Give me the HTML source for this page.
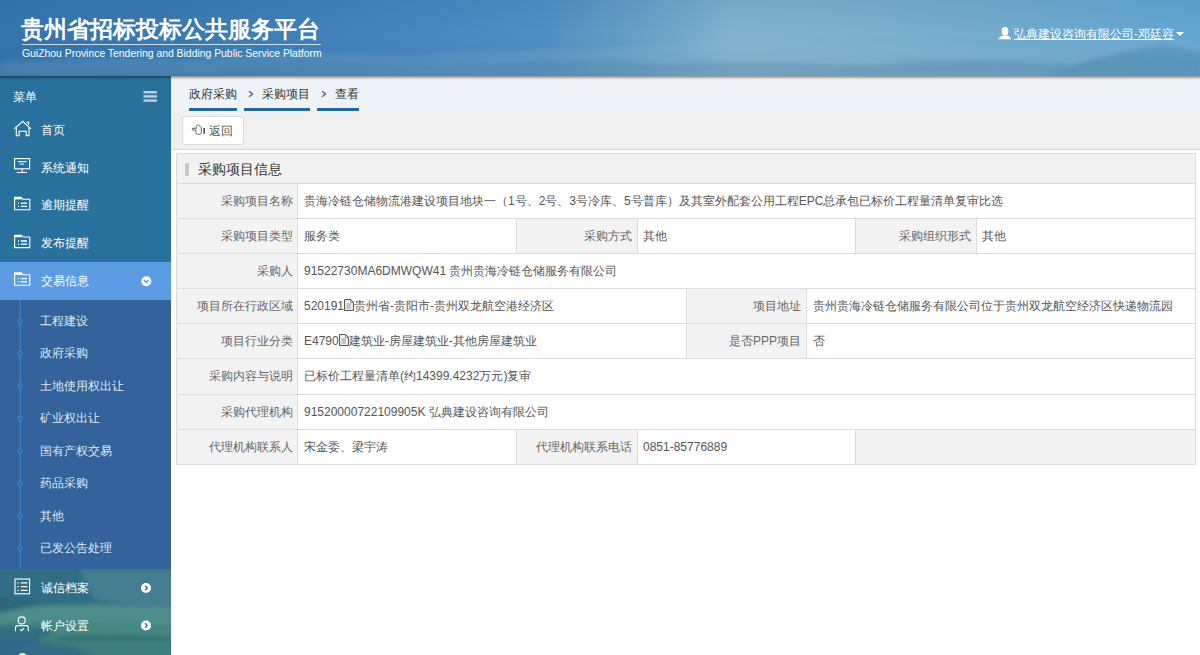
<!DOCTYPE html>
<html><head><meta charset="utf-8">
<style>
*{margin:0;padding:0;box-sizing:border-box}
html,body{width:1200px;height:655px;overflow:hidden;background:#fff;font-family:"Liberation Sans",sans-serif;font-size:12px;color:#333}
.a{position:absolute}
#hdr{left:0;top:0;width:1200px;height:76px;overflow:hidden;z-index:5;
background:
 radial-gradient(ellipse 300px 60px at 700px 10px,rgba(160,200,220,.55),rgba(160,200,220,0)),
 radial-gradient(ellipse 400px 30px at 300px 72px,rgba(120,160,190,.5),rgba(120,160,190,0)),
 linear-gradient(180deg,rgba(0,0,0,0) 60%,rgba(60,100,130,.25) 100%),
 linear-gradient(90deg,#3273ab 0%,#3f80b6 25%,#5e9ac2 50%,#7aafcc 62%,#6aa6cb 78%,#5a9ecb 100%);}
#shadow{left:0;top:76px;width:1200px;height:4px;background:linear-gradient(180deg,rgba(0,0,0,.42),rgba(0,0,0,.12) 60%,rgba(0,0,0,0));z-index:6}
.t1{left:21px;top:14px;font-size:23px;font-weight:bold;color:#fff;line-height:30px;white-space:nowrap}
.ln{left:22px;top:44px;width:299px;height:1px;background:rgba(255,255,255,.75)}
.t2{left:22px;top:47px;font-size:10.4px;color:#fff;line-height:14px;white-space:nowrap}
.user{left:998px;top:26px;font-size:12px;color:#fff;line-height:16px;white-space:nowrap}
.user span{text-decoration:underline}
#side{left:0;top:76px;width:171px;height:579px;background:#28719d;color:#fff;overflow:hidden}
.mt{font-size:12px;line-height:14px;white-space:nowrap;color:#fff}
.sub{left:0;top:224px;width:171px;height:269px;background:#33639a}
.land{left:0;top:493px;width:171px;height:86px;background:radial-gradient(ellipse 50px 25px at 120px 20px,rgba(140,175,185,.35),rgba(140,175,185,0)),radial-gradient(ellipse 60px 20px at 20px 70px,rgba(30,80,100,.35),rgba(30,80,100,0)),linear-gradient(180deg,#306c86 0%,#346f86 30%,#4a8988 45%,#488a80 62%,#3c7c70 80%,#3a776e 100%)}
.vl{left:19px;top:0;width:2px;height:269px;background:#3b8ad6}
.dot{left:17px;width:6px;height:6px;border:1.5px solid #3b8ad6;border-radius:50%;background:#31639a}
.si{z-index:3;left:40px;font-size:12px;line-height:14px;color:#dfe8f2;white-space:nowrap}
#crumb{left:171px;top:76px;width:1029px;height:35px;background:#eef3f8}
.ct{font-size:12px;line-height:14px;color:#333;white-space:nowrap}
.cu{top:108px;height:3px;background:#24679a}
#tool{left:171px;top:111px;width:1029px;height:39px;background:#f0f0f0;border-bottom:1px solid #d8d8d8}
#back{left:182px;top:116px;width:62px;height:29px;background:#fff;border:1px solid #dcdcdc;border-radius:3px}
#panel{left:176px;top:153px;width:1020px;height:312px;border:1px solid #ddd;background:#fff}
#ph{left:177px;top:154px;width:1018px;height:29px;background:#f2f2f2}
.hl{height:1px;background:#ddd}
.vln{width:1px;background:#ddd}
.lab{background:#f3f3f3}
.lt{font-size:12px;line-height:14px;color:#666;text-align:right;white-space:nowrap}
.vt{font-size:12px;line-height:14px;color:#555;white-space:nowrap}
</style></head><body>
<div id="hdr" class="a">
  <svg class="a" style="left:0;top:0" width="1200" height="76" viewBox="0 0 1200 76">
    <defs>
      <linearGradient id="hg" x1="0" y1="0" x2="1" y2="0">
        <stop offset="0" stop-color="#3573ab"/>
        <stop offset="0.15" stop-color="#3a7bb2"/>
        <stop offset="0.27" stop-color="#4081b8"/>
        <stop offset="0.45" stop-color="#508fc1"/>
        <stop offset="0.54" stop-color="#69a2c7"/>
        <stop offset="0.61" stop-color="#82b3cc"/>
        <stop offset="0.68" stop-color="#80b2cb"/>
        <stop offset="0.76" stop-color="#7aafca"/>
        <stop offset="0.88" stop-color="#6eaace"/>
        <stop offset="1" stop-color="#62a6d3"/>
      </linearGradient>
      <linearGradient id="hv" x1="0" y1="0" x2="0" y2="1">
        <stop offset="0" stop-color="#1c4f86" stop-opacity="0.10"/>
        <stop offset="0.45" stop-color="#1c4f86" stop-opacity="0"/>
        <stop offset="1" stop-color="#2a5f8a" stop-opacity="0.10"/>
      </linearGradient>
      <filter id="bl"><feGaussianBlur stdDeviation="2.5"/></filter>
    </defs>
    <rect width="1200" height="76" fill="url(#hg)"/>
    <rect width="1200" height="76" fill="url(#hv)"/>
    <g filter="url(#bl)">
      <path d="M0 62 C60 58 120 56 180 60 C260 52 330 50 400 56 C470 52 520 48 600 50 C680 40 760 36 830 44 C900 46 960 42 1020 48 C1080 40 1140 36 1200 42 V76 H0Z" fill="#9cc0d6" opacity="0.16"/>
      <path d="M0 70 C80 64 150 66 220 70 C300 60 360 58 440 66 C520 62 580 56 660 64 C740 60 800 62 880 66 C960 60 1020 58 1070 64 C1120 54 1160 50 1200 56 V76 H0Z" fill="#4d7fa5" opacity="0.30"/>
      <path d="M1040 76 C1080 62 1120 50 1165 43 C1180 46 1195 50 1205 54 V76Z" fill="#4f8bb3" opacity="0.45"/>
      <path d="M820 76 C860 64 900 58 950 60 C990 58 1020 64 1060 76Z" fill="#6597b8" opacity="0.35"/>
    </g>
  </svg>
<div class="a t1">贵州省招标投标公共服务平台</div>
  <div class="a ln"></div>
  <div class="a t2">GuiZhou Province Tendering and Bidding Public Service Platform</div>
  <div class="a user"><svg width="14" height="14" viewBox="998 26 14 14" style="vertical-align:-2px"><ellipse cx="1005" cy="31.2" rx="3.3" ry="4.3" fill="#fff"/><path d="M998.3 39.3 Q999.5 36.6 1002.3 35.6 H1007.7 Q1010.5 36.6 1011.4 39.3 Z" fill="#fff"/></svg><span style="margin-left:2px">弘典建设咨询有限公司-邓廷容</span><svg width="8" height="6" viewBox="0 0 8 6" style="vertical-align:1px;margin-left:2px"><path d="M0 1h8L4 5z" fill="#fff"/></svg></div>
</div>
<div id="shadow" class="a"></div>

<div id="side" class="a">
  <div class="a sub"></div>
  <div class="a" style="left:0;top:186px;width:171px;height:38px;background:#5b9ce4"></div>
  <svg class="a" style="left:0;top:493px" width="171" height="86" viewBox="0 569 171 86">
    <defs><filter id="lb"><feGaussianBlur stdDeviation="2"/></filter></defs>
    <rect x="0" y="569" width="171" height="86" fill="#316e86"/>
    <g filter="url(#lb)">
      <path d="M80 569 H175 V612 C150 606 120 604 95 600 C88 590 84 580 80 569Z" fill="#5a8c9c" opacity="0.5"/>
      <path d="M-5 596 C20 600 40 602 60 604 L-5 612Z" fill="#27606f" opacity="0.6"/>
      <path d="M22 608 C60 603 110 604 175 608 V628 C120 625 60 622 -5 626 V614 Z" fill="#4d8d8a"/>
      <path d="M-5 622 C60 620 120 622 175 626 V640 C120 636 60 634 -5 636Z" fill="#45887f"/>
      <path d="M-5 634 C60 636 120 636 175 640 V660 H-5Z" fill="#3c7f7a"/>
      <path d="M-5 626 C20 624 40 626 55 630 C40 640 20 650 -5 660Z" fill="#2f6a84" opacity="0.85"/>
      <path d="M-5 640 C40 638 80 646 100 660 H-5Z" fill="#2f6a88" opacity="0.9"/>
      <path d="M60 637 C100 633 140 634 175 637 V641 C140 640 100 640 60 641Z" fill="#2f6c72" opacity="0.6"/>
    </g>
  </svg>
</div>
<svg class="a" style="left:0;top:0;z-index:3" width="172" height="655" viewBox="0 0 172 655" fill="none" stroke="#fff" stroke-width="1.1">
  <!-- hamburger -->
  <g fill="#c4cfd9" stroke="none"><rect x="143.5" y="91" width="13.5" height="2.4"/><rect x="143.5" y="95.2" width="13.5" height="2.4"/><rect x="143.5" y="99.4" width="13.5" height="2.4"/></g>
  <!-- home -->
  <path d="M14.2 128.8 L22.7 121.3 L31 128.8" stroke-linejoin="miter"/>
  <path d="M16.3 127.2 V135.6 H19.1 V131.2 H26.2 V135.6 H29 V127.2"/>
  <path d="M26.6 122.4 H28.6 V124.9" />
  <!-- monitor -->
  <rect x="14.6" y="158.6" width="15" height="10.2"/>
  <path d="M17.9 161.6 H26.5" stroke-width="1.2"/>
  <path d="M19.8 164 H24" stroke-width="1"/>
  <path d="M22.1 168.8 V172.3 M16.8 172.5 H27"/>
  <!-- folders -->
  <g id="fold">
    <path d="M14.6 209.8 V197.4 H21.3 L22.7 199.2 H29.8 V209.8 Z" stroke-linejoin="round"/>
    <path d="M14.6 198.4 H21.6" stroke-width="2"/>
    <path d="M18 203.2 H19 M20.8 203.2 H27 M18 206.4 H19 M20.8 206.4 H27" stroke-width="1.3"/>
  </g>
  <use href="#fold" y="37.8"/>
  <use href="#fold" y="75.5"/>
  <!-- chevron down -->
  <circle cx="146.3" cy="281.3" r="5" fill="#fff" stroke="none"/>
  <path d="M144 280.1 L146.3 282.5 L148.6 280.1" stroke="#5b9ce4" stroke-width="1.5"/>
  <!-- sub line -->
  <path d="M20.2 300 V569" stroke="#3b8fda" stroke-width="1"/>
  <g stroke="#3b8fda" stroke-width="1" fill="#33639a">
    <circle cx="20.2" cy="321" r="2.1"/><circle cx="20.2" cy="353.5" r="2.1"/><circle cx="20.2" cy="386" r="2.1"/><circle cx="20.2" cy="418.5" r="2.1"/>
    <circle cx="20.2" cy="451" r="2.1"/><circle cx="20.2" cy="483.5" r="2.1"/><circle cx="20.2" cy="516" r="2.1"/><circle cx="20.2" cy="548.5" r="2.1"/>
  </g>
  <!-- list icon -->
  <rect x="15" y="579" width="14.6" height="14.8"/>
  <path d="M17.4 582.8 H18.6 M20.8 582.8 H27.4 M17.4 586.6 H18.6 M20.8 586.6 H27.4 M17.4 590.4 H18.6 M20.8 590.4 H27.4" stroke-width="1.2"/>
  <circle cx="146" cy="588" r="5" fill="#fff" stroke="none"/>
  <path d="M145 585.7 L147.3 588 L145 590.3" stroke="#3a7488" stroke-width="1.5"/>
  <!-- person -->
  <circle cx="21.7" cy="620.4" r="3.5"/>
  <path d="M15.5 631.3 V627.5 Q15.5 625.6 18 625.6 H25.6 Q28.3 625.6 28.3 627.5 V631.3"/>
  <path d="M20 629.3 L21.5 630.7 L24 628.2" stroke-width="1.2"/>
  <circle cx="146" cy="625.5" r="5" fill="#fff" stroke="none"/>
  <path d="M145 623.2 L147.3 625.5 L145 627.8" stroke="#3f8476" stroke-width="1.5"/>
  <!-- partial bottom icon -->
  <path d="M17.5 658 A5 5 0 0 1 27.5 658Z" fill="#e8eef0" stroke="none"/>
</svg>
<div class="a mt" style="left:13px;top:90px;z-index:3">菜单</div>
<div class="a mt" style="left:40.5px;top:123px;z-index:3">首页</div>
<div class="a mt" style="left:40.5px;top:161px;z-index:3">系统通知</div>
<div class="a mt" style="left:40.5px;top:198px;z-index:3">逾期提醒</div>
<div class="a mt" style="left:40.5px;top:236px;z-index:3">发布提醒</div>
<div class="a mt" style="left:40.5px;top:274px;z-index:3">交易信息</div>
<div class="a si" style="top:314px">工程建设</div>
<div class="a si" style="top:346px">政府采购</div>
<div class="a si" style="top:379px">土地使用权出让</div>
<div class="a si" style="top:411px">矿业权出让</div>
<div class="a si" style="top:444px">国有产权交易</div>
<div class="a si" style="top:476px">药品采购</div>
<div class="a si" style="top:509px">其他</div>
<div class="a si" style="top:541px">已发公告处理</div>
<div class="a mt" style="left:40.5px;top:581px;z-index:3">诚信档案</div>
<div class="a mt" style="left:40.5px;top:619px;z-index:3">帐户设置</div>

<div id="crumb" class="a"></div>
<div class="a ct" style="left:189px;top:87px">政府采购</div>
<div class="a cu" style="left:189px;width:48px"></div>
<svg class="a" style="left:246px;top:88px" width="10" height="12" viewBox="246 88 10 12"><path d="M249.1 91.2 L252.6 94 L249.1 96.8" fill="none" stroke="#555" stroke-width="1.2"/></svg>
<div class="a ct" style="left:262px;top:87px">采购项目</div>
<div class="a cu" style="left:244px;width:66px"></div>
<svg class="a" style="left:319px;top:88px" width="10" height="12" viewBox="319 88 10 12"><path d="M322.1 91.2 L325.6 94 L322.1 96.8" fill="none" stroke="#555" stroke-width="1.2"/></svg>
<div class="a ct" style="left:335px;top:87px">查看</div>
<div class="a cu" style="left:317px;width:42px"></div>

<div id="tool" class="a"></div>
<div id="back" class="a"></div>
<svg class="a" style="left:188px;top:120px" width="20" height="18" viewBox="188 120 20 18"><path d="M192.4 130 V128.3 H196.4 L196 126.4 L197.6 124.6 L201.3 127.4 V132.3 Q201.3 134.3 199.3 134.3 H197.8 Q195.9 134.3 195.9 132.4 V130 Z" fill="none" stroke="#666" stroke-width="1" stroke-linejoin="round"/><rect x="203.5" y="128" width="1.4" height="5.8" fill="#333"/></svg>
<div class="a vt" style="left:209px;top:124px">返回</div>

<div id="panel" class="a"></div>
<div id="ph" class="a"></div>
<div class="a" style="left:185px;top:163px;width:4px;height:13px;background:#c8c8c8"></div>
<div class="a" style="left:198px;top:161px;font-size:14px;line-height:16px;color:#333;white-space:nowrap">采购项目信息</div>

<!-- label backgrounds -->
<div class="a lab" style="left:177px;top:183px;width:121px;height:281px"></div>
<div class="a lab" style="left:516px;top:218px;width:121px;height:35px"></div>
<div class="a lab" style="left:855px;top:218px;width:121px;height:35px"></div>
<div class="a lab" style="left:686px;top:288px;width:121px;height:70px"></div>
<div class="a lab" style="left:516px;top:429px;width:121px;height:35px"></div>
<div class="a lab" style="left:855px;top:429px;width:340px;height:35px"></div>

<!-- horizontal lines -->
<div class="a hl" style="left:177px;top:183px;width:1018px"></div>
<div class="a hl" style="left:177px;top:218px;width:1018px"></div>
<div class="a hl" style="left:177px;top:253px;width:1018px"></div>
<div class="a hl" style="left:177px;top:288px;width:1018px"></div>
<div class="a hl" style="left:177px;top:323px;width:1018px"></div>
<div class="a hl" style="left:177px;top:358px;width:1018px"></div>
<div class="a hl" style="left:177px;top:394px;width:1018px"></div>
<div class="a hl" style="left:177px;top:429px;width:1018px"></div>
<!-- vertical lines -->
<div class="a vln" style="left:297px;top:183px;height:281px"></div>
<div class="a vln" style="left:516px;top:218px;height:35px"></div>
<div class="a vln" style="left:637px;top:218px;height:35px"></div>
<div class="a vln" style="left:855px;top:218px;height:35px"></div>
<div class="a vln" style="left:976px;top:218px;height:35px"></div>
<div class="a vln" style="left:686px;top:288px;height:70px"></div>
<div class="a vln" style="left:806px;top:288px;height:70px"></div>
<div class="a vln" style="left:516px;top:429px;height:35px"></div>
<div class="a vln" style="left:637px;top:429px;height:35px"></div>
<div class="a vln" style="left:855px;top:429px;height:35px"></div>

<!-- labels -->
<div class="a lt" style="right:907px;top:194px">采购项目名称</div>
<div class="a lt" style="right:907px;top:229px">采购项目类型</div>
<div class="a lt" style="right:907px;top:264px">采购人</div>
<div class="a lt" style="right:907px;top:299px">项目所在行政区域</div>
<div class="a lt" style="right:907px;top:334px">项目行业分类</div>
<div class="a lt" style="right:907px;top:369px">采购内容与说明</div>
<div class="a lt" style="right:907px;top:405px">采购代理机构</div>
<div class="a lt" style="right:907px;top:440px">代理机构联系人</div>
<div class="a lt" style="right:568px;top:229px">采购方式</div>
<div class="a lt" style="right:229px;top:229px">采购组织形式</div>
<div class="a lt" style="right:399px;top:299px">项目地址</div>
<div class="a lt" style="right:399px;top:334px">是否PPP项目</div>
<div class="a lt" style="right:568px;top:440px">代理机构联系电话</div>

<!-- values -->
<div class="a vt" style="left:304px;top:194px">贵海冷链仓储物流港建设项目地块一（1号、2号、3号冷库、5号普库）及其室外配套公用工程EPC总承包已标价工程量清单复审比选</div>
<div class="a vt" style="left:304px;top:229px">服务类</div>
<div class="a vt" style="left:643px;top:229px">其他</div>
<div class="a vt" style="left:982px;top:229px">其他</div>
<div class="a vt" style="left:304px;top:264px">91522730MA6DMWQW41 贵州贵海冷链仓储服务有限公司</div>
<div class="a vt" style="left:304px;top:299px">520191<svg width="10" height="12" viewBox="0 0 10 12" style="vertical-align:-1px"><path d="M0.6 0.6 H6.8 L9.4 3.2 V11.4 H0.6 Z" fill="none" stroke="#444" stroke-width="1"/><path d="M6.6 0.8 V3.4 H9.2" fill="none" stroke="#666" stroke-width="0.8"/><path d="M2.4 5 H7.2 M2.4 7 H7.2 M2.4 9 H7.2" stroke="#888" stroke-width="1"/></svg>贵州省-贵阳市-贵州双龙航空港经济区</div>
<div class="a vt" style="left:813px;top:299px">贵州贵海冷链仓储服务有限公司位于贵州双龙航空经济区快递物流园</div>
<div class="a vt" style="left:304px;top:334px">E4790<svg width="10" height="12" viewBox="0 0 10 12" style="vertical-align:-1px"><path d="M0.6 0.6 H6.8 L9.4 3.2 V11.4 H0.6 Z" fill="none" stroke="#444" stroke-width="1"/><path d="M6.6 0.8 V3.4 H9.2" fill="none" stroke="#666" stroke-width="0.8"/><path d="M2.4 5 H7.2 M2.4 7 H7.2 M2.4 9 H7.2" stroke="#888" stroke-width="1"/></svg>建筑业-房屋建筑业-其他房屋建筑业</div>
<div class="a vt" style="left:813px;top:334px">否</div>
<div class="a vt" style="left:304px;top:369px">已标价工程量清单(约14399.4232万元)复审</div>
<div class="a vt" style="left:304px;top:405px">91520000722109905K 弘典建设咨询有限公司</div>
<div class="a vt" style="left:304px;top:440px">宋金委、梁宇涛</div>
<div class="a vt" style="left:643px;top:440px">0851-85776889</div>
</body></html>
